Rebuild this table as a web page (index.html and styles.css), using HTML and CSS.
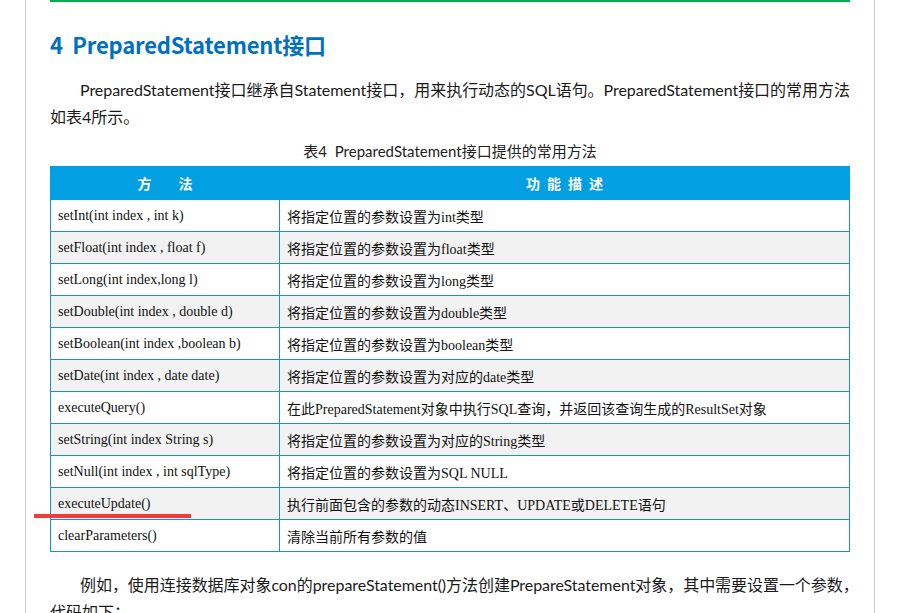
FILE: index.html
```html
<!DOCTYPE html>
<html lang="zh-CN">
<head>
<meta charset="utf-8">
<title>PreparedStatement接口</title>
<link rel="stylesheet" href="styles.css">
</head>
<body>
<div class="page">
  <div class="content">
    <h2 class="title">4&nbsp;&nbsp;PreparedStatement接口</h2>
    <div class="para">
      <div class="line first">PreparedStatement接口继承自Statement接口，用来执行动态的SQL语句。PreparedStatement接口的常用方法</div>
      <div class="line">如表4所示。</div>
    </div>
    <div class="caption">表4&nbsp;&nbsp;PreparedStatement接口提供的常用方法</div>
    <table class="tbl">
      <thead>
        <tr><th class="c1">方<span class="gap"></span>法</th><th class="c2">功能描述</th></tr>
      </thead>
      <tbody>
        <tr><td>setInt(int index , int k)</td><td>将指定位置的参数设置为int类型</td></tr>
        <tr><td>setFloat(int index , float f)</td><td>将指定位置的参数设置为float类型</td></tr>
        <tr><td>setLong(int index,long l)</td><td>将指定位置的参数设置为long类型</td></tr>
        <tr><td>setDouble(int index , double d)</td><td>将指定位置的参数设置为double类型</td></tr>
        <tr><td>setBoolean(int index ,boolean b)</td><td>将指定位置的参数设置为boolean类型</td></tr>
        <tr><td>setDate(int index , date date)</td><td>将指定位置的参数设置为对应的date类型</td></tr>
        <tr><td>executeQuery()</td><td>在此PreparedStatement对象中执行SQL查询，并返回该查询生成的ResultSet对象</td></tr>
        <tr><td>setString(int index String s)</td><td>将指定位置的参数设置为对应的String类型</td></tr>
        <tr><td>setNull(int index , int sqlType)</td><td>将指定位置的参数设置为SQL NULL</td></tr>
        <tr><td class="marked">executeUpdate()<span class="redline"></span></td><td>执行前面包含的参数的动态INSERT、UPDATE或DELETE语句</td></tr>
        <tr><td>clearParameters()</td><td>清除当前所有参数的值</td></tr>
      </tbody>
    </table>
    <div class="para after">
      <div class="line first">例如，使用连接数据库对象con的prepareStatement()方法创建PrepareStatement对象，其中需要设置一个参数，</div>
      <div class="line">代码如下：</div>
    </div>
  </div>
</div>
</body>
</html>
```

FILE: styles.css
```css
html, body {
  margin: 0;
  padding: 0;
  background: #ffffff;
}
body {
  width: 910px;
  height: 613px;
  overflow: hidden;
}
.page {
  margin-left: 25px;
  width: 850px;
  height: 613px;
  border-left: 1px solid #d0d0d0;
  border-right: 1px solid #d0d0d0;
  padding-left: 24px;
  box-sizing: border-box;
}
.content {
  width: 800px;
  border-top: 2px solid #00b050;
}
.title {
  margin: 27px 0 0 0;
  font-family: "Noto Sans CJK SC", "Open Sans", sans-serif;
  font-weight: bold;
  font-size: 22px;
  line-height: 30px;
  color: #0070c0;
  letter-spacing: -0.2px;
}
.para {
  margin: 17px 0 0 0;
  font-family: "Lato", "Noto Sans CJK SC", sans-serif;
  font-size: 16px;
  line-height: 27px;
  color: #1a1a1a;
}
.para .line {
  white-space: nowrap;
}
.para .first {
  padding-left: 30px;
  letter-spacing: -0.05px;
  text-align: justify;
  text-align-last: justify;
}
.para.after {
  margin-top: 19px;
}
.caption {
  margin-top: 11px;
  text-align: center;
  font-family: "Lato", "Noto Sans CJK SC", sans-serif;
  font-size: 15px;
  line-height: 20px;
  color: #222;
}
.tbl {
  margin-top: 5px;
  width: 800px;
  border-collapse: collapse;
  font-family: "Liberation Serif", "Noto Sans CJK SC", serif;
  font-size: 14px;
  color: #111;
}
.tbl th {
  background: #039fe3;
  color: #ffffff;
  height: 32px;
  padding: 0;
  font-family: "Noto Sans CJK SC", sans-serif;
  font-size: 14px;
  font-weight: bold;
  border: 1px solid #039fe3;
}
.tbl th.c1 {
  width: 228px;
}
.tbl th.c2 {
  letter-spacing: 7px;
  text-indent: 7px;
}
.gap {
  display: inline-block;
  width: 27px;
}
.tbl tr {
  height: 32px;
}
.tbl td {
  height: 32px;
  padding: 0 0 0 7px;
  border: 1px solid #1b8fd6;
  box-sizing: border-box;
}
.tbl tbody tr:nth-child(even) td {
  background: #f2f2f2;
}
.marked {
  position: relative;
}
.redline {
  position: absolute;
  left: -17px;
  top: 26px;
  width: 157px;
  height: 4px;
  background: #f33b3b;
}
```
